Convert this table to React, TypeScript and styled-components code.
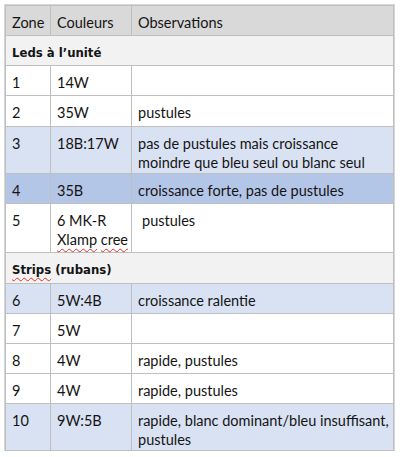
import React from 'react';
import styled, { createGlobalStyle } from 'styled-components';

const Global = createGlobalStyle`
  html, body { margin: 0; padding: 0; background: #ffffff; }
  body { font-family: Lato, "Liberation Sans", sans-serif; }
`;

type Kind = 'header' | 'plain' | 'light' | 'strong';

const bg: Record<Kind, string> = {
  header: '#d9d9d9',
  plain: '#ffffff',
  light: '#d9e2f3',
  strong: '#b4c6e7',
};

const Page = styled.div`
  padding: 5px 0 0 5px;
`;

const Table = styled.table`
  border-collapse: collapse;
  table-layout: fixed;
  width: 388px;
  font-family: Lato, "Open Sans", sans-serif;
  font-size: 14.5px;
  color: #141414;
  outline: 1px solid #d6d6d6;
`;

const Row = styled.tr<{ $kind: Kind; $h: number }>`
  height: ${(p) => p.$h}px;
  background: ${(p) => bg[p.$kind]};
`;

const Cell = styled.td<{ $indent?: boolean }>`
  border: 1px solid #bfbfbf;
  vertical-align: top;
  padding: 7px 4px 0 ${(p) => (p.$indent ? 10 : 6)}px;
  line-height: 19px;
  white-space: nowrap;
  overflow: visible;
  box-sizing: border-box;
`;

const HeadCell = styled(Cell).attrs({ as: 'th' })`
  font-weight: 400;
  text-align: left;
`;

const SectionRow = styled.tr<{ $h: number }>`
  height: ${(p) => p.$h}px;
  background: #f2f2f2;
`;

const SectionCell = styled.td`
  border: 1px solid #bfbfbf;
  vertical-align: top;
  padding: 7px 6px 0 6px;
  line-height: 19px;
  font-family: "DejaVu Sans Condensed", "DejaVu Sans", sans-serif;
  font-stretch: condensed;
  font-weight: 700;
  font-size: 13px;
`;

const Misspelled = styled.span`
  text-decoration: underline wavy #e0302a;
  text-decoration-thickness: 1px;
  text-underline-offset: 3px;
`;

const Col = styled.col<{ $w: number }>`
  width: ${(p) => p.$w}px;
`;

type DataRow = {
  kind: Kind;
  h: number;
  zone: React.ReactNode;
  color: React.ReactNode;
  obs: React.ReactNode;
  indent?: boolean;
};

type Item = { section: React.ReactNode; h: number } | DataRow;

const items: Item[] = [
  { section: <>Leds à l’unité</>, h: 30 },
  { kind: 'plain', h: 30, zone: '1', color: '14W', obs: '' },
  { kind: 'plain', h: 31, zone: '2', color: '35W', obs: 'pustules' },
  {
    kind: 'light',
    h: 47,
    zone: '3',
    color: '18B:17W',
    obs: (
      <>
        pas de pustules mais croissance
        <br />
        moindre que bleu seul ou blanc seul
      </>
    ),
  },
  { kind: 'strong', h: 30, zone: '4', color: '35B', obs: 'croissance forte, pas de pustules' },
  {
    kind: 'plain',
    h: 49,
    zone: '5',
    color: (
      <>
        6 MK-R
        <br />
        <Misspelled>Xlamp</Misspelled> <Misspelled>cree</Misspelled>
      </>
    ),
    obs: 'pustules',
    indent: true,
  },
  {
    section: (
      <>
        <Misspelled>Strips</Misspelled> (rubans)
      </>
    ),
    h: 31,
  },
  { kind: 'light', h: 30, zone: '6', color: '5W:4B', obs: 'croissance ralentie' },
  { kind: 'plain', h: 30, zone: '7', color: '5W', obs: '' },
  { kind: 'plain', h: 30, zone: '8', color: '4W', obs: 'rapide, pustules' },
  { kind: 'plain', h: 30, zone: '9', color: '4W', obs: 'rapide, pustules' },
  {
    kind: 'light',
    h: 47,
    zone: '10',
    color: '9W:5B',
    obs: (
      <>
        rapide, blanc dominant/bleu insuffisant,
        <br />
        pustules
      </>
    ),
  },
];

export default function App() {
  return (
    <>
      <Global />
      <Page>
        <Table>
          <colgroup>
            <Col $w={45} />
            <Col $w={81} />
            <Col $w={262} />
          </colgroup>
          <thead>
            <Row $kind="header" $h={30}>
              <HeadCell>Zone</HeadCell>
              <HeadCell>Couleurs</HeadCell>
              <HeadCell>Observations</HeadCell>
            </Row>
          </thead>
          <tbody>
            {items.map((it, i) =>
              'section' in it ? (
                <SectionRow key={i} $h={it.h}>
                  <SectionCell colSpan={3}>{it.section}</SectionCell>
                </SectionRow>
              ) : (
                <Row key={i} $kind={it.kind} $h={it.h}>
                  <Cell>{it.zone}</Cell>
                  <Cell>{it.color}</Cell>
                  <Cell $indent={it.indent}>{it.obs}</Cell>
                </Row>
              )
            )}
          </tbody>
        </Table>
      </Page>
    </>
  );
}
